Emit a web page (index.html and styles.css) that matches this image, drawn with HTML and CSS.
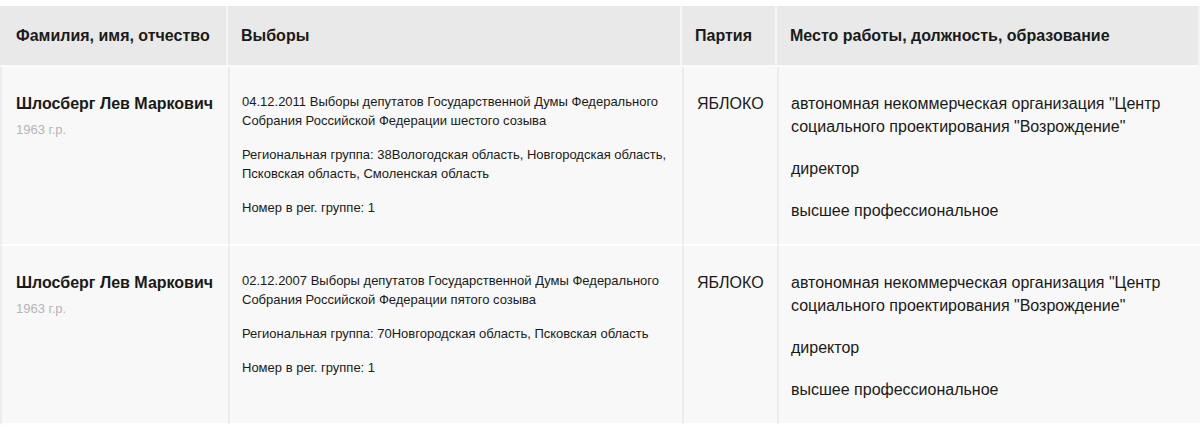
FILE: index.html
```html
<!DOCTYPE html>
<html lang="ru">
<head>
<meta charset="utf-8">
<link rel="stylesheet" href="styles.css">
</head>
<body>
<table class="cands">
  <colgroup>
    <col class="c-name"><col class="c-elec"><col class="c-party"><col class="c-work">
  </colgroup>
  <thead>
    <tr>
      <th>Фамилия, имя, отчество</th>
      <th>Выборы</th>
      <th>Партия</th>
      <th>Место работы, должность, образование</th>
    </tr>
  </thead>
  <tbody>
    <tr>
      <td>
        <div class="name">Шлосберг Лев Маркович</div>
        <div class="year">1963 г.р.</div>
      </td>
      <td class="elec">
        <p>04.12.2011 Выборы депутатов Государственной Думы Федерального Собрания Российской Федерации шестого созыва</p>
        <p>Региональная группа: 38Вологодская область, Новгородская область, Псковская область, Смоленская область</p>
        <p>Номер в рег. группе: 1</p>
      </td>
      <td class="party">ЯБЛОКО</td>
      <td class="work">
        <p>автономная некоммерческая организация "Центр социального проектирования "Возрождение"</p>
        <p>директор</p>
        <p>высшее профессиональное</p>
      </td>
    </tr>
    <tr>
      <td>
        <div class="name">Шлосберг Лев Маркович</div>
        <div class="year">1963 г.р.</div>
      </td>
      <td class="elec">
        <p>02.12.2007 Выборы депутатов Государственной Думы Федерального Собрания Российской Федерации пятого созыва</p>
        <p>Региональная группа: 70Новгородская область, Псковская область</p>
        <p>Номер в рег. группе: 1</p>
      </td>
      <td class="party">ЯБЛОКО</td>
      <td class="work">
        <p>автономная некоммерческая организация "Центр социального проектирования "Возрождение"</p>
        <p>директор</p>
        <p>высшее профессиональное</p>
      </td>
    </tr>
  </tbody>
</table>
</body>
</html>
```
FILE: styles.css
```css
html, body {
  margin: 0;
  padding: 0;
  background: #ffffff;
}
body {
  font-family: "Liberation Sans", Arial, sans-serif;
  color: #1a1a1a;
  padding-top: 6px;
}
.cands {
  border-collapse: separate;
  border-spacing: 0;
  width: 1200px;
  table-layout: fixed;
}
.c-name { width: 228px; }
.c-elec { width: 454px; }
.c-party { width: 95px; }
.c-work { width: 423px; }

.cands th {
  background: #e9e9e9;
  text-align: left;
  font-weight: bold;
  font-size: 16px;
  height: 59px;
  padding: 0 12px 0 13px;
  border-right: 2px solid #f6f6f6;
  border-bottom: 2px solid #fafafa;
  vertical-align: middle;
}
.cands th:first-child { padding-left: 16px; }
.cands th:last-child { border-right: 2px solid #f3f3f3; }

.cands td {
  background: #f8f8f8;
  vertical-align: top;
  padding: 25px 10px 22px 12px;
  border-left: 2px solid #ececec;
  border-bottom: 2px solid #ffffff;
}
.cands td:first-child { padding-left: 14px; }
.cands td.party { padding-left: 13px; }

.name {
  font-weight: bold;
  font-size: 16px;
  line-height: 23px;
}
.year {
  font-size: 13px;
  color: #b5b5b5;
  line-height: 18px;
  margin-top: 6px;
}
.elec p {
  margin: 0 0 15px;
  font-size: 13px;
  line-height: 19px;
}
.party {
  font-size: 16px;
  line-height: 23px;
}
.work p {
  margin: 0 0 19px;
  font-size: 16px;
  line-height: 23px;
}
.work p:last-child, .elec p:last-child { margin-bottom: 0; }
```
